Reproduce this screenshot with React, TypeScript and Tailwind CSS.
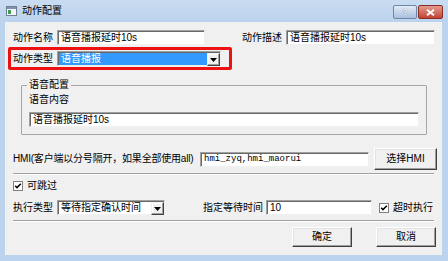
import React from "react";

const font = { fontFamily: '"Liberation Sans", "Noto Sans CJK SC", sans-serif' };

// sunken edit box, classic look
function Edit({ w, value, mono }: { w: string; value: string; mono?: boolean }) {
  return (
    <div
      className={`${w} h-[15px] bg-white border border-t-[#a0a0a0] border-l-[#a0a0a0] border-r-[#f0f0f0] border-b-[#f0f0f0] shadow-[inset_1px_1px_0_#696969] flex items-center pl-[3px] overflow-hidden whitespace-nowrap text-[10px] leading-[13px] text-black`}
      style={mono ? { fontFamily: '"Liberation Mono", "Noto Sans CJK SC", monospace', fontSize: "9px" } : undefined}
    >
      {value}
    </div>
  );
}

function DropArrow() {
  return (
    <div className="w-[13px] h-[13px] shrink-0 bg-[#f0f0f0] border border-t-[#f0f0f0] border-l-[#f0f0f0] border-r-[#404040] border-b-[#404040] shadow-[inset_-1px_-1px_0_#a0a0a0,inset_1px_1px_0_#ffffff] flex items-center justify-center">
      <svg width="7" height="4" viewBox="0 0 7 4">
        <path d="M0 0H7L3.5 4Z" fill="#000" />
      </svg>
    </div>
  );
}

function Combo({ w, value, selected }: { w: string; value: string; selected?: boolean }) {
  return (
    <div
      className={`${w} h-[15px] bg-white border border-t-[#a0a0a0] border-l-[#a0a0a0] border-r-[#f0f0f0] border-b-[#f0f0f0] shadow-[inset_1px_1px_0_#696969] flex items-stretch pl-[1px] pt-[1px]`}
    >
      <div
        className={`flex-1 flex items-center pl-[2px] text-[10px] leading-[12px] whitespace-nowrap overflow-hidden ${
          selected ? "bg-[#3399ff] text-white" : "text-black"
        }`}
      >
        {value}
      </div>
      <DropArrow />
    </div>
  );
}

function Button({ w, h, label }: { w: string; h: string; label: string }) {
  return (
    <div
      className={`${w} ${h} bg-[#f0f0f0] border border-t-[#ffffff] border-l-[#ffffff] border-r-[#404040] border-b-[#404040] shadow-[inset_-1px_-1px_0_#a0a0a0,inset_1px_1px_0_#e3e3e3] flex items-center justify-center text-[10px] leading-[12px] text-black`}
    >
      {label}
    </div>
  );
}

function CheckBox() {
  return (
    <svg width="10" height="10" viewBox="0 0 10 10" className="shrink-0">
      <rect x="0.5" y="0.5" width="9" height="9" fill="#fff" stroke="#808080" />
      <path d="M2.2 4.8L4 6.6L7.8 2.8" fill="none" stroke="#000" strokeWidth="1.5" />
    </svg>
  );
}

function Separator() {
  return <div className="mx-[8px] h-[2px] border-t border-t-[#a0a0a0] border-b border-b-white" />;
}

export default function App() {
  return (
    <div className="w-[448px] h-[261px] bg-[#bcd3ed] flex flex-col overflow-hidden" style={font}>
      {/* title bar */}
      <div className="h-[22px] flex items-center bg-gradient-to-b from-[#c9dcf1] to-[#bcd3ed]">
        <svg width="11" height="10" viewBox="0 0 11 10" className="ml-[6px]">
          <rect x="0.5" y="0.5" width="10" height="9" fill="#f4f6f8" stroke="#6e7f93" />
          <rect x="1" y="1" width="9" height="2" fill="#7b94b5" />
          <rect x="2" y="4" width="3" height="4" fill="#3e9b4f" />
        </svg>
        <span className="ml-[5px] text-[10px] leading-[12px] text-black">动作配置</span>
        <div className="ml-auto mr-[5px] flex items-center self-start mt-[5px]">
          <div className="w-[24px] h-[14px] rounded-[2px] border border-[#6f86a5] bg-gradient-to-b from-[#e2ebf6] to-[#a9c0dd] flex items-center justify-center text-[9px] leading-[9px] font-bold text-[#f5f7fa] [text-shadow:0_0_1px_#46597a]">
            ?
          </div>
          <div className="ml-[1px] w-[25px] h-[14px] rounded-[2px] border border-[#8b2c25] bg-gradient-to-b from-[#e29a8e] to-[#c24234] flex items-center justify-center">
            <svg width="9" height="7" viewBox="0 0 9 7">
              <path d="M1 0.8L8 6.2M8 0.8L1 6.2" stroke="#fff" strokeWidth="2" />
            </svg>
          </div>
        </div>
      </div>

      {/* client area */}
      <div className="ml-[5px] mr-[6px] mb-[6px] flex-1 bg-[#f0f0f0] flex flex-col">
        {/* row 1 */}
        <div className="mt-[8px] ml-[8px] flex items-center h-[15px]">
          <span className="w-[44px] text-[10px] leading-[12px]">动作名称</span>
          <Edit w="w-[148px]" value="语音播报延时10s" />
          <span className="ml-[37px] w-[44px] text-[10px] leading-[12px]">动作描述</span>
          <Edit w="w-[149px]" value="语音播报延时10s" />
        </div>

        {/* row 2, highlighted */}
        <div className="mt-[2px] ml-[3px] w-[224px] h-[23px] border-[3px] border-[#ee1111] rounded-[2px] flex items-center pl-[2px]">
          <span className="w-[44px] text-[10px] leading-[12px]">动作类型</span>
          <Combo w="w-[164px]" value="语音播报" selected />
        </div>

        {/* group box */}
        <fieldset className="mt-[9px] ml-[16px] w-[406px] border border-[#a6a6a6] px-[7px] pb-[7px] rounded-[1px]">
          <legend className="-ml-[2px] px-[2px] text-[10px] leading-[12px]">语音配置</legend>
          <div className="mt-[3px] text-[10px] leading-[12px]">语音内容</div>
          <div className="mt-[6px]">
            <Edit w="w-[390px]" value="语音播报延时10s" />
          </div>
        </fieldset>

        {/* HMI row */}
        <div className="mt-[13px] ml-[8px] flex items-center h-[22px]">
          <span className="w-[187px] text-[10px] leading-[12px] whitespace-nowrap tracking-[-0.2px]">
            HMI(客户端以分号隔开，如果全部使用all)
          </span>
          <Edit w="w-[169px]" value="hmi_zyq,hmi_maorui" mono />
          <div className="ml-[5px]">
            <Button w="w-[63px]" h="h-[22px]" label="选择HMI" />
          </div>
        </div>

        <div className="mt-[3px]">
          <Separator />
        </div>

        {/* skip checkbox */}
        <div className="mt-[4px] ml-[8px] flex items-center h-[13px] gap-[4px]">
          <CheckBox />
          <span className="text-[10px] leading-[12px]">可跳过</span>
        </div>

        {/* exec type row */}
        <div className="mt-[8px] ml-[8px] flex items-center h-[15px]">
          <span className="w-[44px] text-[10px] leading-[12px]">执行类型</span>
          <Combo w="w-[108px]" value="等待指定确认时间" />
          <span className="ml-[38px] w-[63px] text-[10px] leading-[12px]">指定等待时间</span>
          <Edit w="w-[106px]" value="10" />
          <div className="ml-[7px] flex items-center gap-[4px]">
            <CheckBox />
            <span className="text-[10px] leading-[12px]">超时执行</span>
          </div>
        </div>

        <div className="mt-[5px]">
          <Separator />
        </div>

        {/* buttons */}
        <div className="mt-[5px] flex justify-end gap-[24px] pr-[6px]">
          <Button w="w-[60px]" h="h-[20px]" label="确定" />
          <Button w="w-[60px]" h="h-[20px]" label="取消" />
        </div>
      </div>
    </div>
  );
}
